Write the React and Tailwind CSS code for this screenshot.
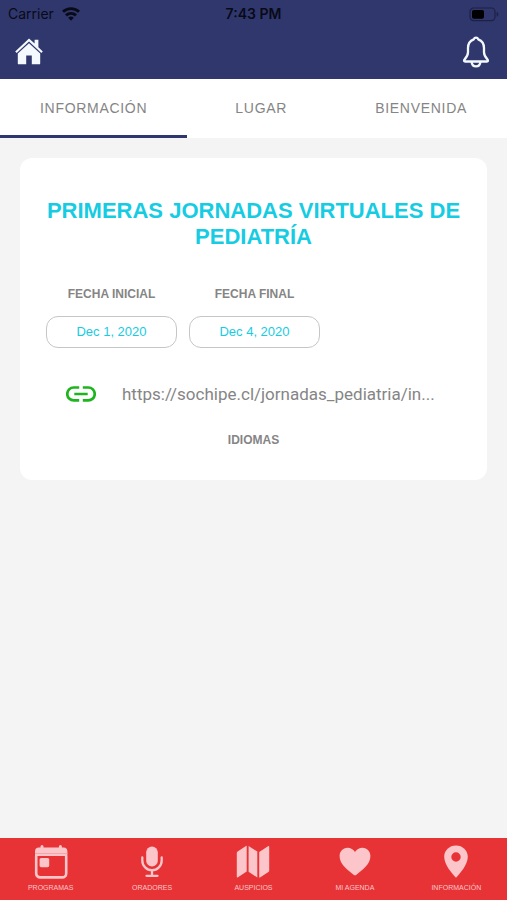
import React, { useState } from 'react';

const tabs = ['INFORMACIÓN', 'LUGAR', 'BIENVENIDA'];

const dates = [
  { id: 'start', label: 'FECHA INICIAL', value: 'Dec 1, 2020' },
  { id: 'end', label: 'FECHA FINAL', value: 'Dec 4, 2020' },
];

const WifiIcon = () => (
  <svg viewBox="0 0 18 14" className="h-[14px] w-[18px]" fill="none" stroke="currentColor" strokeWidth="2.9">
    <path d="M1 4.8a11.6 11.6 0 0 1 16 0" />
    <path d="M4 8.4a7.2 7.2 0 0 1 10 0" />
    <path d="M9 13.8 6.2 10.8a4 4 0 0 1 5.6 0z" fill="currentColor" stroke="none" />
  </svg>
);

const BatteryIcon = () => (
  <svg viewBox="0 0 30 15" className="h-[15px] w-[30px]">
    <rect x="1" y="1" width="25" height="12.6" rx="3.6" fill="none" stroke="#1d2145" strokeWidth="1.2" />
    <rect x="3" y="3" width="12" height="8.8" rx="1.8" fill="#000" />
    <path d="M27.6 5v4.6c1.2-.4 1.8-1.2 1.8-2.3S28.8 5.4 27.6 5z" fill="#1d2145" />
  </svg>
);

const HomeIcon = () => (
  <svg viewBox="0 0 28 27" className="h-[27px] w-[28px]" fill="#f4f8ff">
    <path d="M14 .6 19.6 5.6V1.8h3.8v7.4l4.4 4.2-1.5 1.6L14 3.6 1.7 15 .2 13.4z" />
    <path d="M14 5.2 25.2 15.6v9.8a.9.9 0 0 1-.9.9h-7.5v-8.8h-5.6v8.8H3.7a.9.9 0 0 1-.9-.9v-9.8z" />
  </svg>
);

const BellIcon = () => (
  <svg viewBox="0 0 28 32" className="h-[32px] w-[28px]" fill="none" stroke="#f4f8ff" strokeWidth="2.3" strokeLinejoin="round">
    <path d="M14 1.7c-1 0-1.9.7-2.3 1.7C7.8 4.9 6 7.9 6 12v4.3c0 2.9-1.1 4.7-3.5 7.3-.8.9-.5 1.9.6 1.9h21.8c1.1 0 1.4-1 .6-1.9-2.4-2.6-3.5-4.4-3.5-7.3V12c0-4.1-1.8-7.1-5.7-8.6-.4-1-1.3-1.7-2.3-1.7z" />
    <path d="M9.6 25.6c.2 3 1.9 4.8 4.4 4.8s4.2-1.8 4.4-4.8" />
  </svg>
);

const LinkIcon = () => (
  <svg viewBox="0 0 30 16" className="h-[16px] w-[30px] shrink-0" fill="none" stroke="#1db51d" strokeWidth="2.7">
    <path d="M13.2 1.5H7.7a6.4 6.4 0 0 0 0 12.9h5.5M16.8 1.5h5.5a6.4 6.4 0 0 1 0 12.9h-5.5M8.3 8h13.4" />
  </svg>
);

const CalendarIcon = () => (
  <svg viewBox="0 0 34 34" className="h-[34px] w-[34px]">
    <path d="M8 1.6v4M26.4 1.6v4" stroke="#fbc5c9" strokeWidth="3" strokeLinecap="round" />
    <path d="M5 2.6h24.4a4 4 0 0 1 4 4V11H1V6.6a4 4 0 0 1 4-4z" fill="#fbc5c9" />
    <path d="M2.2 11v17.4a4 4 0 0 0 4 4h22a4 4 0 0 0 4-4V11" fill="none" stroke="#fbc5c9" strokeWidth="2.6" />
    <path d="M1 8.5h32.4" stroke="#f6a4a8" strokeWidth="1" />
    <rect x="5.6" y="13" width="9.6" height="9.2" rx="1.6" fill="#fbc5c9" />
  </svg>
);

const MicIcon = () => (
  <svg viewBox="0 0 34 34" className="h-[34px] w-[34px]">
    <rect x="11.2" y="1.5" width="11.6" height="20" rx="5.8" fill="#fbc5c9" />
    <path
      d="M7.3 12.5v3a9.7 9.7 0 0 0 19.4 0v-3M17 25.2v5.3M11.5 30.8h11"
      fill="none"
      stroke="#fbc5c9"
      strokeWidth="2.3"
      strokeLinecap="round"
    />
  </svg>
);

const MapIcon = () => (
  <svg viewBox="0 0 34 34" className="h-[34px] w-[34px]" fill="#fbc5c9">
    <path d="M10 .9c.4-.3.7-.1.7.4v25.3L2 32.3c-.7.4-1.2.2-1.2-.6V8.100c0-.7.2-1.2.8-1.6z" />
    <path d="M12.6.9l8.7 5.6v26L12.6 26.8z" />
    <path d="M23.2 6.9 32 1.3c.7-.4 1.2-.2 1.2.6v23.6c0 .7-.2 1.2-.8 1.6l-8.4 5.4c-.5.3-.8.1-.8-.4z" />
  </svg>
);

const HeartIcon = () => (
  <svg viewBox="0 0 34 34" className="h-[34px] w-[34px]" fill="#fbc5c9">
    <path d="M24.5 2.8c-3.2 0-6 1.6-7.5 4.2-1.5-2.6-4.3-4.2-7.5-4.2-4.6 0-7.9 3.7-7.9 8.3 0 8.2 7.7 13.5 14 18.6.9.7 1.9.7 2.8 0 6.3-5.1 14-10.4 14-18.6 0-4.6-3.3-8.3-7.9-8.3z" />
  </svg>
);

const PinIcon = () => (
  <svg viewBox="0 0 34 34" className="h-[34px] w-[34px]" fill="#fbc5c9">
    <path
      fillRule="evenodd"
      d="M17 .6C10.3.6 5.2 5.5 5.2 11.8 5.2 20 13 28.3 17 32.8c4-4.5 11.8-12.8 11.8-21C28.8 5.5 23.7.6 17 .6zm0 6.7a4.7 4.7 0 1 1 0 9.4 4.7 4.7 0 0 1 0-9.4z"
    />
  </svg>
);

const navItems = [
  { label: 'PROGRAMAS', Icon: CalendarIcon },
  { label: 'ORADORES', Icon: MicIcon },
  { label: 'AUSPICIOS', Icon: MapIcon },
  { label: 'MI AGENDA', Icon: HeartIcon },
  { label: 'INFORMACIÓN', Icon: PinIcon },
];

const App = () => {
  const [activeTab, setActiveTab] = useState('INFORMACIÓN');

  return (
    <div className="flex min-h-screen flex-col bg-[#f4f4f4] font-['Liberation_Sans',Arial,sans-serif]">
      <header className="bg-[#30376d]">
        <div className="grid h-7 grid-cols-3 items-center px-2 font-['Inter',sans-serif] text-sm leading-5 text-[#080a18]">
          <div className="flex items-center gap-2">
            <span>Carrier</span>
            <WifiIcon />
          </div>
          <span className="text-center font-semibold">7:43 PM</span>
          <div className="flex justify-end">
            <BatteryIcon />
          </div>
        </div>
        <div className="flex h-[51px] items-center justify-between pb-1 pl-[15px] pr-[17px]">
          <button aria-label="Inicio" className="cursor-pointer">
            <HomeIcon />
          </button>
          <button aria-label="Notificaciones" className="cursor-pointer">
            <BellIcon />
          </button>
        </div>
      </header>

      <nav className="flex justify-between bg-white">
        {tabs.map((tab) => (
          <button
            key={tab}
            onClick={() => setActiveTab(tab)}
            className={`h-[59px] cursor-pointer border-b-3 px-10 pt-0.5 text-sm tracking-wider text-[#858585] ${
              activeTab === tab ? 'border-[#30376d]' : 'border-transparent'
            }`}
          >
            {tab}
          </button>
        ))}
      </nav>

      <main className="flex-1 px-5 py-5">
        <section className="rounded-xl bg-white px-[26px] pb-8 pt-10">
          <h1 className="text-center text-[22px] font-bold leading-[26px] text-[#16cce2]">
            PRIMERAS JORNADAS VIRTUALES DE PEDIATRÍA
          </h1>

          <div className="mt-9 flex gap-3">
            {dates.map(({ id, label, value }) => (
              <div key={id} className="w-[131px] text-center">
                <p className="text-xs font-bold leading-4 text-[#858585]">{label}</p>
                <p className="mt-3.5 rounded-xl border border-[#c6c6c6] text-[13px] leading-[30px] text-[#16cce2]">
                  {value}
                </p>
              </div>
            ))}
          </div>

          <div className="mt-[34px] flex items-center gap-[26px] pl-5">
            <LinkIcon />
            <a
              href="https://sochipe.cl/jornadas_pediatria/in..."
              className="truncate font-['Roboto',sans-serif] text-[17px] leading-6 text-[#858585]"
            >
              https://sochipe.cl/jornadas_pediatria/in...
            </a>
          </div>

          <p className="mt-[26px] text-center text-xs font-bold leading-4 text-[#858585]">IDIOMAS</p>
        </section>
      </main>

      <nav className="sticky bottom-0 grid grid-cols-5 bg-[#e83336] pb-[7px] pt-[7px]">
        {navItems.map(({ label, Icon }) => (
          <a key={label} href="#" className="flex flex-col items-center gap-1">
            <Icon />
            <span className="text-[7px] leading-[10px] text-[#fbc5c9]">{label}</span>
          </a>
        ))}
      </nav>
    </div>
  );
};

export default App;
